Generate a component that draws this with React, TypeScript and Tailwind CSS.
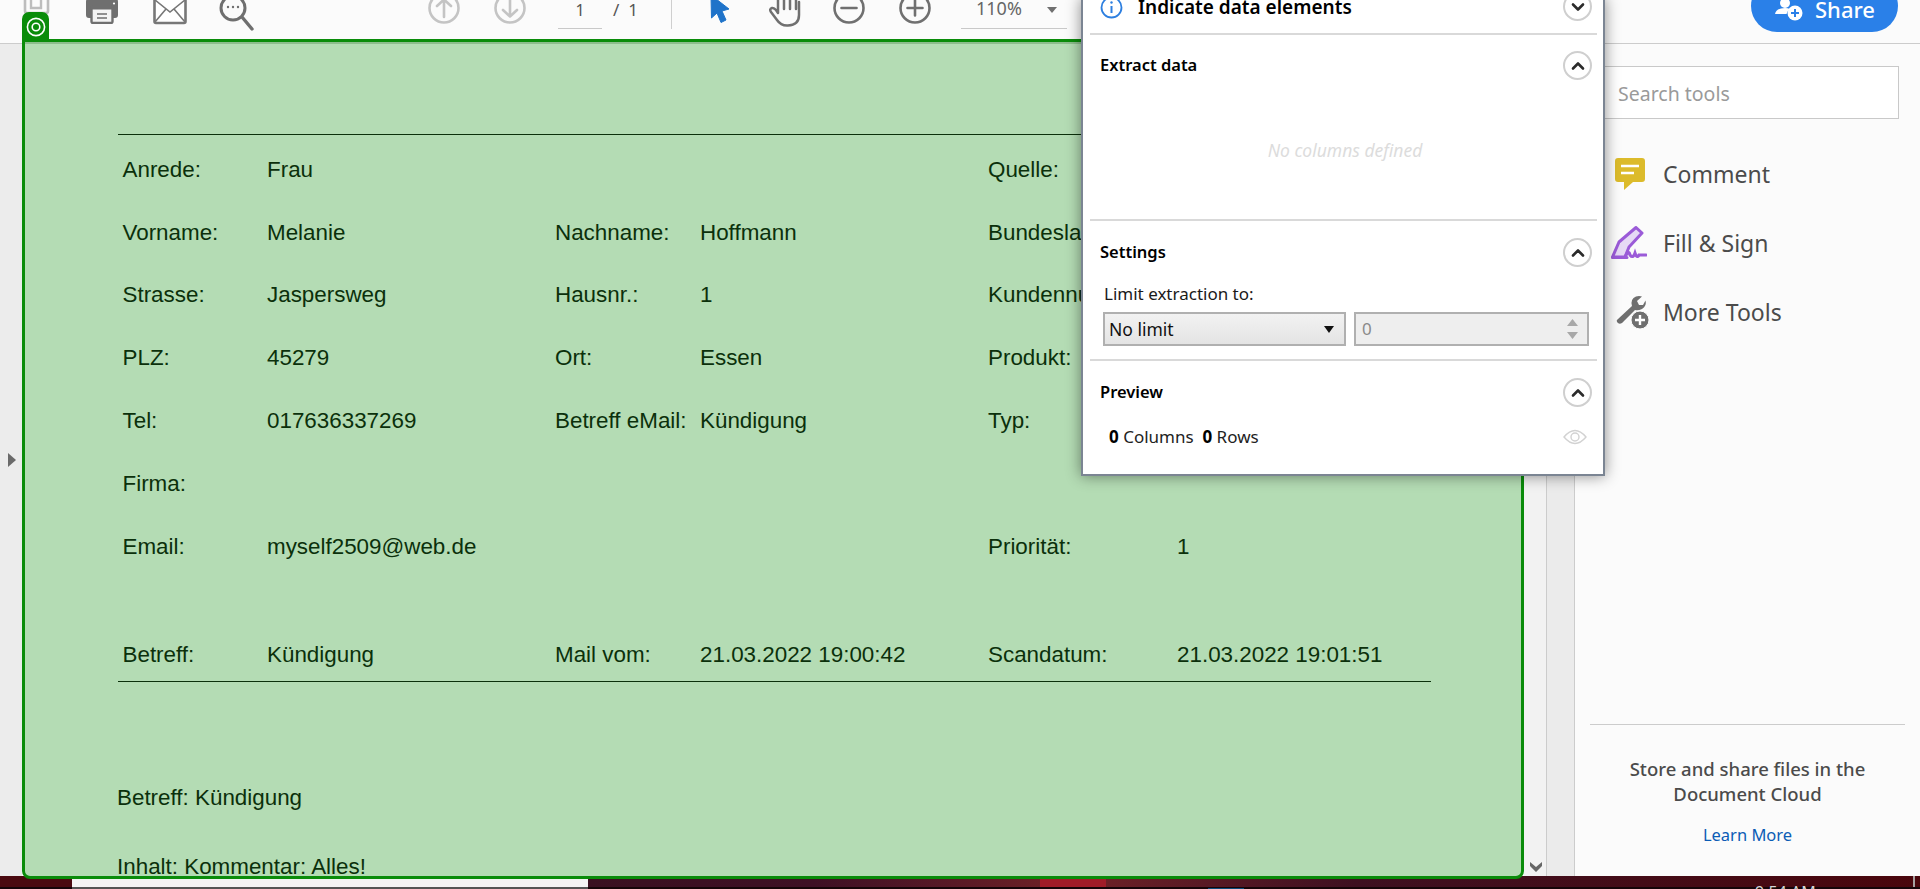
import React from "react";

const rows: { h: string; cells: string[] }[] = [
  { h: "h-[62.9px]", cells: ["Anrede:", "Frau", "", "", "Quelle:", ""] },
  { h: "h-[62.9px]", cells: ["Vorname:", "Melanie", "Nachname:", "Hoffmann", "Bundesland:", ""] },
  { h: "h-[62.9px]", cells: ["Strasse:", "Jaspersweg", "Hausnr.:", "1", "Kundennummer:", ""] },
  { h: "h-[62.9px]", cells: ["PLZ:", "45279", "Ort:", "Essen", "Produkt:", ""] },
  { h: "h-[62.9px]", cells: ["Tel:", "017636337269", "Betreff eMail:", "Kündigung", "Typ:", ""] },
  { h: "h-[62.9px]", cells: ["Firma:", "", "", "", "", ""] },
  { h: "h-[62.9px]", cells: ["Email:", "myself2509@web.de", "", "", "Priorität:", "1"] },
];

function Chevron({ down, className }: { down?: boolean; className?: string }) {
  return (
    <div className={"flex h-[29px] w-[29px] items-center justify-center rounded-full border-2 border-[#cfcfcf] bg-white " + (className ?? "")}>
      <svg width="14" height="10" viewBox="0 0 14 10">
        <path
          d={down ? "M2 2.5 L7 7.5 L12 2.5" : "M2 7.5 L7 2.5 L12 7.5"}
          fill="none"
          stroke="#2b2b2b"
          strokeWidth="2.6"
          strokeLinecap="round"
          strokeLinejoin="round"
        />
      </svg>
    </div>
  );
}

function CircleArrow({ dir }: { dir: "up" | "down" }) {
  return (
    <svg width="32" height="32" viewBox="0 0 32 32" className="-mt-[8px]">
      <circle cx="16" cy="16" r="14.5" fill="none" stroke="#c4c4c4" strokeWidth="2.6" />
      <path
        d={dir === "up" ? "M16 25 V8 M9 14 L16 7.5 L23 14" : "M16 7 V24 M9 18 L16 24.5 L23 18"}
        fill="none"
        stroke="#c4c4c4"
        strokeWidth="2.6"
        strokeLinecap="round"
        strokeLinejoin="round"
      />
    </svg>
  );
}

function CirclePm({ plus }: { plus?: boolean }) {
  return (
    <svg width="32" height="32" viewBox="0 0 32 32" className="-mt-[8px]">
      <circle cx="16" cy="16" r="14.5" fill="none" stroke="#707070" strokeWidth="2.6" />
      <path d={plus ? "M8.5 16 H23.5 M16 8.5 V23.5" : "M8.5 16 H23.5"} fill="none" stroke="#707070" strokeWidth="2.6" strokeLinecap="round" />
    </svg>
  );
}

function Toolbar() {
  return (
    <div className="flex h-[44px] shrink-0 items-start border-b border-[#cccccc] bg-[#fbfbfb] font-['Noto_Sans',sans-serif]">
      <div className="ml-[23px] h-[14px] w-[27px] overflow-hidden">
        <svg width="27" height="30" viewBox="0 0 27 30" className="-mt-[16px]">
          <path d="M2 2 H20 L25 7 V27 Q25 29 23 29 H4 Q2 29 2 27 Z" fill="none" stroke="#bdbdbd" strokeWidth="2.6" />
          <path d="M8 10 V24 H18 V10" fill="none" stroke="#bdbdbd" strokeWidth="2.4" />
        </svg>
      </div>
      <svg width="34" height="24" viewBox="0 0 34 24" className="ml-[35px]">
        <path d="M4 -2 H30 Q33 -2 33 2 V15 Q33 18 30 18 H28 V10 H6 V18 H4 Q1 18 1 15 V2 Q1 -2 4 -2 Z" fill="#6f6f6f" />
        <rect x="6.5" y="7" width="21" height="16" rx="1.5" fill="#f3f3f3" stroke="#6f6f6f" strokeWidth="2.4" />
        <path d="M12 14 H22 M12 18 H22" stroke="#6f6f6f" strokeWidth="1.6" />
        <rect x="6" y="7" width="22" height="2.5" fill="#6f6f6f" />
        <circle cx="29" cy="3.5" r="1.1" fill="#fff" />
      </svg>
      <svg width="34" height="25" viewBox="0 0 34 25" className="ml-[34px]">
        <rect x="1.5" y="-3" width="31" height="26" rx="1.5" fill="#fff" stroke="#777" strokeWidth="2.6" />
        <path d="M2 0 L17 12 L32 0 M2 22 L13 9 M32 22 L21 9" fill="none" stroke="#777" strokeWidth="1.6" />
      </svg>
      <svg width="35" height="32" viewBox="0 0 35 32" className="ml-[32px]">
        <circle cx="14" cy="8" r="12" fill="none" stroke="#6f6f6f" strokeWidth="3" />
        <path d="M23 17 L33 29" stroke="#6f6f6f" strokeWidth="3.4" strokeLinecap="round" />
        <circle cx="9" cy="7" r="1.2" fill="#6f6f6f" />
        <circle cx="14" cy="7" r="1.2" fill="#6f6f6f" />
        <circle cx="19" cy="7" r="1.2" fill="#6f6f6f" />
      </svg>
      <div className="ml-[174px] flex items-start gap-[34px]">
        <CircleArrow dir="up" />
        <CircleArrow dir="down" />
      </div>
      <div className="ml-[32px] h-[29px] w-[44px] border-b border-[#c9c9c9] text-center text-[16px] leading-[20px] text-[#555]">1</div>
      <div className="ml-[11px] w-[58px] text-[17px] leading-[20px] text-[#555]">/&nbsp;&nbsp;1</div>
      <div className="h-[29px] w-px bg-[#cfcfcf]" />
      <svg width="20" height="23" viewBox="0 0 20 23" className="ml-[38px]">
        <path d="M1 -5 L19 9 L12 11 L16 20 L11 22.5 L7 13 L1.5 18 Z" fill="#1f73c9" stroke="#1f73c9" strokeWidth="1" strokeLinejoin="round" />
      </svg>
      <svg width="34" height="27" viewBox="0 0 34 27" className="ml-[38px]">
        <path
          d="M9 20 L3 12 Q1 9 4 8 Q6 7.5 8 10 L10 13 V-2 M10 5 V-2 M16 9 V-4 M22 9 V-4 M28 9 V-2 M31 2 V15 Q31 25 20 25.5 Q13 26 9 20"
          fill="none"
          stroke="#707070"
          strokeWidth="2.5"
          strokeLinecap="round"
          strokeLinejoin="round"
        />
      </svg>
      <div className="ml-[31px]">
        <CirclePm />
      </div>
      <div className="ml-[34px]">
        <CirclePm plus />
      </div>
      <div className="ml-[30px] flex h-[29px] w-[106px] items-start border-b border-[#c9c9c9]">
        <span className="ml-[15px] text-[18px] leading-[17px] text-[#666]">110%</span>
        <svg width="12" height="8" viewBox="0 0 12 8" className="ml-[24px] mt-[6px]">
          <path d="M1 1 H11 L6 7 Z" fill="#707070" />
        </svg>
      </div>
    </div>
  );
}

function Doc() {
  return (
    <div className="relative z-10 -mt-[5px] h-[840px] w-[1502px] shrink-0 rounded-b-[8px] rounded-tr-none border-[3px] border-[#0a8c0a] bg-[#b4dcb4] font-['Liberation_Sans',sans-serif] text-[22.4px] text-[#0b300b]">
      <div className="absolute -left-[3px] -top-[30px] flex h-[30px] w-[27px] items-center justify-center rounded-t-[7px] bg-[#0a8c0a]">
        <svg width="20" height="20" viewBox="0 0 20 20">
          <circle cx="10" cy="10" r="8.6" fill="none" stroke="#fff" strokeWidth="1.6" />
          <circle cx="10" cy="10" r="3.8" fill="none" stroke="#fff" strokeWidth="1.6" />
        </svg>
      </div>
      <div className="h-[834px] overflow-hidden rounded-b-[6px]">
        <div className="h-[2px] bg-[#8dbd8d]" />
        <div className="ml-[93px] mt-[90px] w-[1313px] border-y border-[#0b300b] pl-[4.5px] pt-[3px]">
          {rows.map((r) => (
            <div key={r.cells[0]} className={"grid grid-cols-[144.5px_288px_145px_288px_189px_1fr] items-center " + r.h}>
              {r.cells.map((c, i) => (
                <div key={i} className="whitespace-nowrap">
                  {c}
                </div>
              ))}
            </div>
          ))}
          <div className="mt-[49.5px] grid h-[53.5px] grid-cols-[144.5px_288px_145px_288px_189px_1fr] items-center">
            <div>Betreff:</div>
            <div>Kündigung</div>
            <div>Mail vom:</div>
            <div>21.03.2022 19:00:42</div>
            <div>Scandatum:</div>
            <div>21.03.2022 19:01:51</div>
          </div>
        </div>
        <div className="ml-[92px] mt-[100px] h-[32px] leading-[32px]">Betreff: Kündigung</div>
        <div className="ml-[92px] mt-[37px] h-[32px] leading-[32px]">Inhalt: Kommentar: Alles!</div>
      </div>
    </div>
  );
}

function Popup() {
  return (
    <div className="absolute left-[1081px] top-[-2px] z-20 h-[478px] w-[524px] border-x-2 border-b-2 border-[#7b8593] bg-white pl-[7px] pr-[6px] font-['Noto_Sans',sans-serif] text-black shadow-[0_0_14px_rgba(0,0,0,0.45)]">
      <div className="relative flex h-[37px] items-center justify-between border-b-2 border-[#d9d9d9] pl-[10px] pr-[5px]">
        <div className="-mt-[16px] flex items-center">
          <svg width="23" height="23" viewBox="0 0 23 23">
            <circle cx="11.5" cy="11.5" r="10" fill="none" stroke="#2d7fe0" strokeWidth="1.8" />
            <path d="M11.5 10 V17" stroke="#2d7fe0" strokeWidth="2" />
            <circle cx="11.5" cy="6.5" r="1.2" fill="#2d7fe0" />
          </svg>
          <span className="ml-[15px] whitespace-nowrap text-[19px] font-semibold leading-[23px]">Indicate data elements</span>
        </div>
        <Chevron down className="-mt-[18px]" />
      </div>
      <div className="h-[186px] border-b-2 border-[#d9d9d9] pl-[10px] pr-[5px] pt-[16px]">
        <div className="flex items-center justify-between">
          <span className="text-[16.5px] font-semibold">Extract data</span>
          <Chevron />
        </div>
        <div className="mt-[57px] pr-[2px] text-center text-[17.5px] italic text-[#dcdcdc]">No columns defined</div>
      </div>
      <div className="h-[140px] border-b-2 border-[#d9d9d9] pl-[10px] pr-[5px] pt-[17px]">
        <div className="flex items-center justify-between">
          <span className="text-[16.5px] font-semibold">Settings</span>
          <Chevron />
        </div>
        <div className="ml-[4px] mt-[16px] text-[17px] leading-[22px] text-[#1a1a1a]">Limit extraction to:</div>
        <div className="ml-[3px] mt-[7px] flex gap-[8px]">
          <div className="flex h-[34px] w-[243px] items-center justify-between border-2 border-[#b0b0b0] bg-gradient-to-b from-[#f2f2f2] to-[#e4e4e4] pl-[4px] pr-[10px] text-[17.5px] text-[#111]">
            <span>No limit</span>
            <svg width="10" height="7" viewBox="0 0 10 7">
              <path d="M0 0 H10 L5 7 Z" fill="#111" />
            </svg>
          </div>
          <div className="flex h-[34px] w-[235px] items-center justify-between border-2 border-[#b0b0b0] bg-[#eeeeee] pl-[6px] pr-[9px] text-[17px] text-[#8a8a8a]">
            <span>0</span>
            <svg width="11" height="24" viewBox="0 0 11 24">
              <path d="M0 9 H11 L5.5 2 Z M0 15 H11 L5.5 22 Z" fill="#a8a8a8" />
            </svg>
          </div>
        </div>
      </div>
      <div className="pl-[10px] pr-[5px] pt-[17px]">
        <div className="flex items-center justify-between">
          <span className="text-[16.5px] font-semibold">Preview</span>
          <Chevron />
        </div>
        <div className="mt-[19px] flex items-center justify-between pl-[9px] pr-[5px] text-[17px] leading-[22px] text-[#222]">
          <span>
            <b className="font-bold text-black">0</b> Columns&nbsp;&nbsp;<b className="font-bold text-black">0</b> Rows
          </span>
          <svg width="24" height="16" viewBox="0 0 24 16">
            <path d="M1 8 Q12 -5 23 8 Q12 21 1 8 Z" fill="none" stroke="#d2d2d2" strokeWidth="1.4" />
            <circle cx="12" cy="8" r="4" fill="none" stroke="#d2d2d2" strokeWidth="1.4" />
          </svg>
        </div>
      </div>
    </div>
  );
}

function RightPanel() {
  return (
    <div className="relative flex w-[346px] shrink-0 flex-col border-l border-[#cccccc] bg-[#fbfbfb] font-['Noto_Sans',sans-serif] text-[#4b4b4b]">
      <div className="ml-[12px] mt-[22px] flex h-[53px] w-[312px] items-center border border-[#c9c9c9] bg-white pl-[30px] pt-[2px] text-[19.5px] text-[#9a9a9a]">
        Search tools
      </div>
      <div className="ml-[40px] mt-[38px] flex h-[34px] items-center gap-[18px] text-[23px]">
        <svg width="30" height="33" viewBox="0 0 30 33" className="shrink-0">
          <path d="M3 0 H27 Q30 0 30 3 V21 Q30 24 27 24 H18 L9 32 V24 H3 Q0 24 0 21 V3 Q0 0 3 0 Z" fill="#dcbb2b" />
          <path d="M6 8 H24 M6 15 H19" stroke="#fff" strokeWidth="2.4" />
        </svg>
        <span>Comment</span>
      </div>
      <div className="ml-[36px] mt-[35px] flex h-[34px] items-center gap-[16px] text-[23px]">
        <svg width="36" height="34" viewBox="0 0 36 34" className="shrink-0">
          <path d="M1.5 31 L8 16 L25 1.5 L31 7 L18 21 L14 31 Z" fill="#e6d9f5" stroke="#9b5bd8" strokeWidth="3" strokeLinejoin="round" />
          <path d="M1.5 31.5 H16 M14 31 Q18 23 19 29 Q22 33 24 27 Q26 33 28 29 L35 29" fill="none" stroke="#9b5bd8" strokeWidth="3" strokeLinecap="round" />
        </svg>
        <span>Fill &amp; Sign</span>
      </div>
      <div className="ml-[40px] mt-[35px] flex h-[34px] items-center gap-[14px] text-[23px]">
        <svg width="34" height="34" viewBox="0 0 34 34" className="shrink-0">
          <path d="M3 24 L17 11 Q15 4 21 1.5 Q24 0.5 27 1.5 L22 6 L24 10 L28 10 L30.5 5.5 Q32 11 27 14 Q23 16 20 15 L7 28 Q4 30 2 27 Q1 25 3 24 Z" fill="#6f6f6f" />
          <circle cx="25" cy="25" r="9" fill="#6f6f6f" stroke="#fbfbfb" strokeWidth="1" />
          <path d="M20 25 H30 M25 20 V30" stroke="#fff" strokeWidth="2.4" />
        </svg>
        <span>More Tools</span>
      </div>
      <div className="mx-[15px] mt-auto border-t border-[#cccccc] pb-[29px] pt-[31px] text-center">
        <div className="text-[18.5px] font-medium leading-[25px]">
          Store and share files in the
          <br />
          Document Cloud
        </div>
        <div className="mt-[17px] text-[16.5px] leading-[24px] text-[#0b5cb5]">Learn More</div>
      </div>
    </div>
  );
}

export default function App() {
  return (
    <div className="relative flex h-[889px] w-[1920px] flex-col overflow-hidden bg-[#fbfbfb]">
      <Toolbar />
      <div className="flex h-[832px] shrink-0">
        <div className="flex w-[22px] shrink-0 items-center bg-[#ececec] pl-[8px]">
          <svg width="8" height="14" viewBox="0 0 8 14">
            <path d="M0 0 L8 7 L0 14 Z" fill="#6a6a6a" />
          </svg>
        </div>
        <Doc />
        <div className="flex w-[23px] shrink-0 items-end justify-center border-r border-[#cccccc] bg-[#f2f2f2] pb-[4px] pl-[1px]">
          <svg width="12" height="10" viewBox="0 0 12 10">
            <path d="M0 0 L6 5 L12 0 V4 L6 10 L0 4 Z" fill="#666" />
          </svg>
        </div>
        <div className="w-[27px] shrink-0 bg-[#ebebeb]" />
        <RightPanel />
      </div>
      <div className="relative flex h-[13px] shrink-0 overflow-hidden bg-[#4a060c] font-['Noto_Sans',sans-serif]">
        <div className="w-[72px] bg-[#4a0a10]" />
        <div className="w-[516px] border-b-2 border-[#555555] bg-[#f4f4f4]" />
        <div className="w-[452px] bg-gradient-to-r from-[#3a1020] via-[#3e1024] to-[#6a2026]" />
        <div className="w-[66px] bg-[#a01c28]" />
        <div className="w-[250px] bg-gradient-to-r from-[#6a2026] to-[#3e1020]" />
        <div className="flex-1 bg-gradient-to-r from-[#3e1020] to-[#4a060c]" />
        <div className="absolute bottom-0 left-0 h-[2px] w-[72px] bg-[#160408]" />
        <div className="absolute bottom-0 left-[588px] h-[2px] w-[1332px] bg-[#160408]" />
        <div className="absolute bottom-0 left-[1208px] h-[1px] w-[36px] bg-[#0a4a7a]" />
        <div className="absolute left-[1755px] top-[6px] whitespace-nowrap text-[16px] leading-[20px] text-[#d8d8d8]">9:54 AM</div>
        <div className="absolute left-[1913px] top-0 h-[11px] w-[2px] bg-[#a8a0a0]" />
      </div>
      <Popup />
      <div className="absolute left-[1751px] top-[-20px] z-20 flex h-[52px] w-[147px] items-center rounded-[26px] bg-[#2a80e8] pl-[24px] pt-[5px] font-['Noto_Sans',sans-serif] text-[22px] font-medium text-white">
        <svg width="28" height="22" viewBox="0 0 28 22" className="-mb-[3px] shrink-0">
          <circle cx="10" cy="4" r="5" fill="#fff" />
          <path d="M0 15 Q1 9 10 9 Q13 9 15 10 Q12 12 11.5 15 Z" fill="#fff" />
          <circle cx="20" cy="14" r="7.5" fill="#fff" />
          <path d="M16 14 H24 M20 10 V18" stroke="#2a80e8" strokeWidth="2" />
        </svg>
        <span className="ml-[12px] leading-none">Share</span>
      </div>
    </div>
  );
}
